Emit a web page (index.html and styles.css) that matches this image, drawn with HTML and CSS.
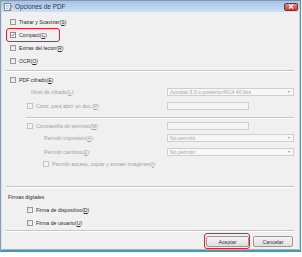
FILE: index.html
```html
<!DOCTYPE html>
<html lang="es">
<head>
    <meta charset="UTF-8">
    <title>Opciones de PDF</title>
    <link rel="stylesheet" href="styles.css">
</head>
<body>
    <div class="window">
        <div class="titlebar">
            <svg class="title-icon" width="9" height="8" viewBox="0 0 9 8">
                <rect x="0.5" y="0.5" width="6" height="7" fill="#fdfdfd" stroke="#6f8bb0"/>
                <path d="M2 2.5h3M2 4h3M2 5.5h2" stroke="#7a9cc8" stroke-width="0.7"/>
                <path d="M5 6.5l3.2-4.2" stroke="#d98a2b" stroke-width="1.2"/>
            </svg>
            <span class="title">Opciones de PDF</span>
            <div class="close">
                <svg width="6" height="5" viewBox="0 0 6 5"><path d="M1 0.5l4 4M5 0.5l-4 4" stroke="#fff" stroke-width="1.2"/></svg>
            </div>
        </div>

        <div class="content">
            <div class="row first">
                <span class="box"></span><span class="label">Trazar y Suavizar(<u>S</u>)</span>
            </div>
            <div class="row marked">
                <span class="box checked">
                    <svg width="6" height="6" viewBox="0 0 6 6"><path d="M1 3l1.3 1.5L5 1" fill="none" stroke="#2c3e70" stroke-width="1"/></svg>
                </span><span class="label">Compact(<u>C</u>)</span>
                <span class="highlight"></span>
            </div>
            <div class="row">
                <span class="box"></span><span class="label">Extras del lector(<u>R</u>)</span>
            </div>
            <div class="row">
                <span class="box"></span><span class="label">OCR(<u>O</u>)</span>
            </div>

            <div class="separator"></div>

            <div class="row tight">
                <span class="box"></span><span class="label">PDF cifrado(<u>E</u>)</span>
            </div>
            <div class="field-row">
                <span class="label muted indent-text">Nivel de cifrado(<u>L</u>):</span>
                <div class="select">Acrobat 3.0 o posterior/RC4 40 bits<span class="arrow"></span></div>
            </div>
            <div class="field-row spaced">
                <span class="check-label indent-box"><span class="box off"></span><span class="label muted">Contr. para abrir un doc.(<u>P</u>)</span></span>
                <div class="textbox"></div>
            </div>

            <div class="separator inner"></div>

            <div class="field-row after-sep">
                <span class="check-label indent-box"><span class="box off"></span><span class="label muted">Contraseña de permiso(<u>M</u>)</span></span>
                <div class="textbox"></div>
            </div>
            <div class="field-row">
                <span class="label muted indent-deep">Permitir impresión(<u>A</u>):</span>
                <div class="select">No permitir<span class="arrow"></span></div>
            </div>
            <div class="field-row spaced">
                <span class="label muted indent-deep">Permitir cambios(<u>Z</u>):</span>
                <div class="select">No permitir<span class="arrow"></span></div>
            </div>
            <div class="row indent-sub">
                <span class="box off"></span><span class="label muted">Permitir acceso, copiar y extraer imágenes(<u>I</u>)</span>
            </div>

            <div class="separator wide-gap"></div>

            <div class="group-title">Firmas digitales</div>
            <div class="row indent-box">
                <span class="box"></span><span class="label">Firma de dispositivo(<u>D</u>)</span>
            </div>
            <div class="row indent-box">
                <span class="box"></span><span class="label">Firma de usuario(<u>U</u>)</span>
            </div>

            <div class="separator short"></div>

            <div class="buttons">
                <div class="button marked">Aceptar<span class="highlight"></span></div>
                <div class="button">Cancelar</div>
            </div>
        </div>
    </div>
</body>
</html>
```

FILE: styles.css
```css
/* General Styles */
body {
    margin: 0;
    background: #ffffff;
    font-family: 'Liberation Sans', Arial, sans-serif;
    font-size: 5.2px;
    color: #2b2b2b;
}

.window {
    width: 301px;
    height: 252px;
    box-sizing: border-box;
    background: #f0f0f0;
    border-left: 1px solid #8f9aa8;
    border-right: 1px solid #3a9fb5;
    border-bottom: 2px solid #3a9fb5;
    box-shadow: inset 1px 0 0 #d6e2f0, inset -1px 0 0 #c8d0da, inset 0 -1px 0 #a9b1ba;
}

/* Title bar */
.titlebar {
    height: 12px;
    display: flex;
    align-items: center;
    padding: 0 2px 0 3px;
    background: linear-gradient(to bottom, #a6c3e8, #cddff3);
    border-top: 1px solid #8196b0;
    box-sizing: border-box;
}

.title-icon {
    margin-right: 2px;
}

.title {
    font-size: 6.4px;
    color: #2e3846;
    flex: 1;
}

.close {
    width: 14px;
    height: 8px;
    display: flex;
    align-items: center;
    justify-content: center;
    border: 1px solid #7e3028;
    border-radius: 2px;
    background: linear-gradient(to bottom, #e8907f, #c2402f);
    box-sizing: border-box;
}

/* Content */
.content {
    padding: 4px 6px 0 9px;
}

.row {
    height: 13px;
    display: flex;
    align-items: center;
}

.row.first {
    height: 12px;
}

.row.tight {
    height: 12px;
    margin-top: 2px;
}

.marked {
    position: relative;
}

.box {
    width: 6px;
    height: 6px;
    box-sizing: border-box;
    border: 1px solid #9a9a9a;
    background: linear-gradient(to bottom right, #dcdcdc, #fbfbfb);
    display: inline-flex;
    align-items: center;
    justify-content: center;
    margin-right: 3px;
    flex-shrink: 0;
}

.box.checked {
    border-color: #8a8a8a;
    background: #f6f6f6;
}

.box.off {
    border-color: #c4c4c4;
    background: #f3f3f3;
}

.box svg {
    display: block;
}

.label u {
    text-decoration: underline;
}

.muted {
    color: #a2a2a2;
}

.row.marked .highlight {
    position: absolute;
    left: -4px;
    top: 0;
    width: 54px;
    height: 14px;
}

.highlight {
    box-sizing: border-box;
    border: 1.5px solid #e0202c;
    border-radius: 3px;
}

.separator {
    height: 0;
    margin: 3px 0 0 -4px;
    border-top: 1px solid #c5c5c5;
    border-bottom: 1px solid #ffffff;
}

.separator.inner {
    margin: 5px 0 0 16px;
}

.separator.wide-gap {
    margin-top: 16px;
}

.separator.short {
    margin-top: 1px;
}

/* Rows with a field on the right */
.field-row {
    height: 12px;
    display: grid;
    grid-template-columns: 1fr 127px;
    align-items: center;
}

.field-row.spaced {
    margin-top: 2px;
}

.field-row.after-sep {
    margin-top: 1px;
}

.check-label {
    display: flex;
    align-items: center;
}

.indent-text {
    padding-left: 21px;
}

.indent-box {
    padding-left: 17px;
}

.indent-deep {
    padding-left: 34px;
}

.indent-sub {
    padding-left: 33px;
    height: 12px;
}

.select {
    height: 8px;
    position: relative;
    box-sizing: border-box;
    border: 1px solid #cfcfcf;
    background: #f7f7f7;
    color: #a8a8a8;
    padding-left: 2px;
    line-height: 6px;
}

.arrow {
    position: absolute;
    right: 3px;
    top: 2px;
    border-left: 1.5px solid transparent;
    border-right: 1.5px solid transparent;
    border-top: 2px solid #9a9a9a;
}

.textbox {
    width: 82px;
    height: 8px;
    box-sizing: border-box;
    border: 1px solid #cfcfcf;
    background: #f4f4f4;
}

.group-title {
    height: 12px;
    line-height: 12px;
    margin: 3px 0 0 -2px;
}

/* Buttons */
.buttons {
    display: flex;
    justify-content: flex-end;
    gap: 4px;
    margin-top: 4px;
    padding-right: 1px;
}

.button {
    height: 11px;
    box-sizing: border-box;
    display: flex;
    align-items: center;
    justify-content: center;
    border: 1px solid #9a9a9a;
    border-radius: 2px;
    background: linear-gradient(to bottom, #f6f6f6, #dedede);
    color: #333333;
    width: 40px;
}

.button.marked {
    width: 43px;
}

.button .highlight {
    position: absolute;
    left: -3px;
    right: -2px;
    top: -4px;
    bottom: -3px;
}
```
